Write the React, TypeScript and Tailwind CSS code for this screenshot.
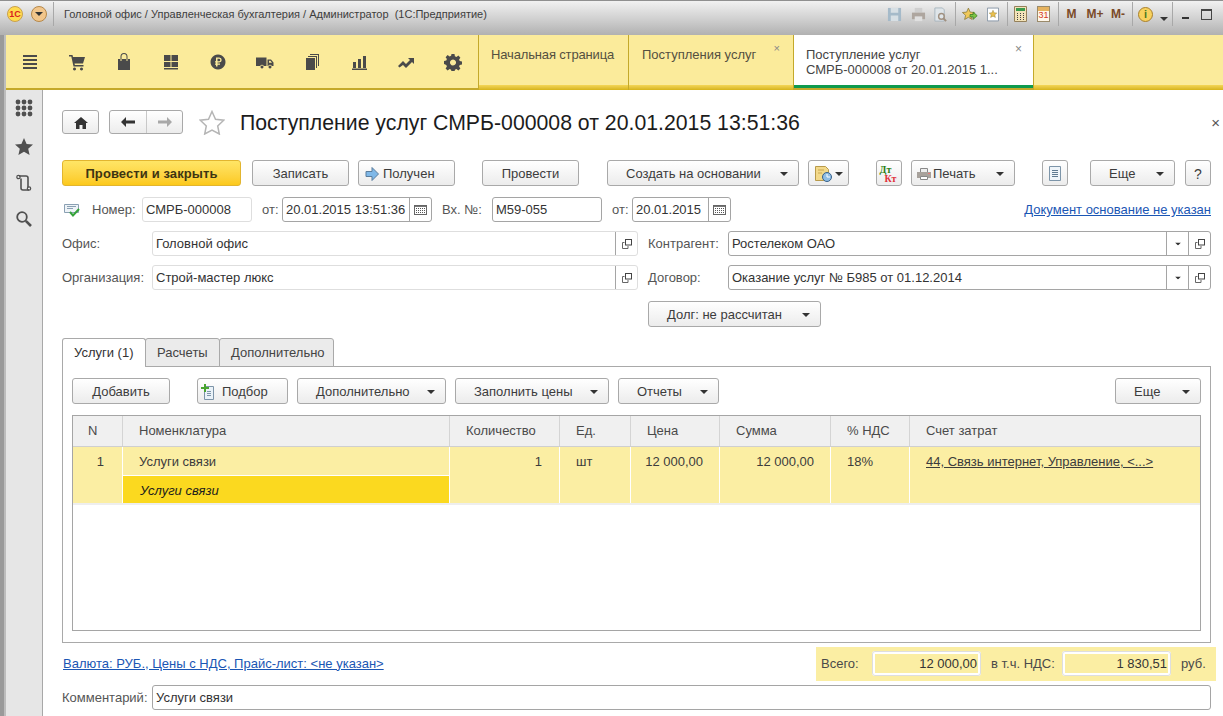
import React from 'react';

const font = "font-['Liberation_Sans',Arial,sans-serif]";

function Caret({ className = '' }: { className?: string }) {
  return (
    <svg width="8" height="4" viewBox="0 0 8 4" className={className}>
      <path d="M0 0h8L4 4z" fill="#333" />
    </svg>
  );
}

function Btn({
  className = '',
  children,
  caret,
}: {
  className?: string;
  children?: React.ReactNode;
  caret?: boolean;
}) {
  return (
    <div
      className={`relative flex h-[26px] shrink-0 items-center justify-center rounded-[3px] border border-[#a9a9a9] bg-gradient-to-b from-white to-[#ececec] pt-px text-[#3c3c3c] ${className}`}
    >
      {children}
      {caret && <Caret className="absolute right-[10px] top-[11px]" />}
    </div>
  );
}

function Cal() {
  return (
    <svg width="13" height="10" viewBox="0 0 13 10">
      <rect x="0.5" y="0.5" width="12" height="9" fill="#fff" stroke="#666" />
      <path d="M1 1.500h11" stroke="#777" />
      <path d="M2 3.500h1M4 3.500h1M6 3.500h1M8 3.500h1M10 3.500h1M2 5.500h1M4 5.500h1M6 5.500h1M8 5.500h1M10 5.500h1M2 7.500h1M4 7.500h1M6 7.500h1M8 7.500h1M10 7.500h1" stroke="#555" />
    </svg>
  );
}

function OpenIcon() {
  return (
    <svg width="10" height="10" viewBox="0 0 10 10" fill="none">
      <path d="M.5 3.500h2M.5 3.500v6h5.500V7" stroke="#666" />
      <rect x="3.500" y="0.500" width="6" height="5.500" stroke="#444" />
    </svg>
  );
}

function Input({
  className = '',
  children,
  light,
}: {
  className?: string;
  children?: React.ReactNode;
  light?: boolean;
}) {
  return (
    <div
      className={`flex h-[25px] shrink-0 items-center overflow-hidden whitespace-nowrap rounded-[3px] border bg-white text-[#333] ${
        light ? 'border-[#dedede]' : 'border-[#a5a5a5]'
      } ${className}`}
    >
      {children}
    </div>
  );
}

function Side({ className = '', children }: { className?: string; children: React.ReactNode }) {
  return (
    <div className={`flex h-full w-[22px] shrink-0 items-center justify-center border-l border-[#a5a5a5] ${className}`}>
      {children}
    </div>
  );
}

function Label({ className = '', children }: { className?: string; children: React.ReactNode }) {
  return <span className={`shrink-0 whitespace-nowrap text-[#555] ${className}`}>{children}</span>;
}

function Sep({ className = '' }: { className?: string }) {
  return <div className={`h-[24px] w-px shrink-0 bg-[#a8a8a8] ${className}`} />;
}

const topIcons = [
  <path key="m" d="M1 2h14v2H1zM1 6h14v2H1zM1 10h14v2H1zM1 14h14v2H1z" />,
  <path key="c" d="M0 2h3.500l.5 2h12l-2 6.500H5.500l.4 1.500H14.500v1.500H4.500L2.300 3.500H0zM5.500 14.500a1.500 1.500 0 1 0 .01 0zM12.500 14.500a1.500 1.500 0 1 0 .01 0z" />,
  <path key="b" fillRule="evenodd" d="M2 6h2.500V3.500a3.500 3.500 0 0 1 7 0V6H14v11H2zM5.500 6h5V3.500a2.500 2.500 0 0 0-5 0zM4.500 6v2h1V6zM10.500 6v2h1V6z" />,
  <path key="g" d="M1 2h6.500v6H1zM8.500 2H15v6H8.500zM1 9h6.500v5H1zM8.500 9H15v5H8.500zM1 15h14v1.500H1z" />,
  <path key="r" fillRule="evenodd" d="M8 1.500a7.500 7.500 0 1 0 .01 0zM6 4.500h3.200a2.500 2.500 0 0 1 0 5H7.500v1H10v1.300H7.500v1.700H6v-1.700H5v-1.300h1v-1H5V8.200h1zM7.500 5.800v2.400h1.600a1.200 1.200 0 0 0 0-2.400z" />,
  <path
    key="t"
    fillRule="evenodd"
    d="M-1 4.500h10.500v8.500H6.800a2 2 0 0 0-3.600 0H-1zM10.500 6.500H14l2.500 3v3.500h-1.700a2 2 0 0 0-3.600 0h-.7zM12 7.700v2h3l-1.600-2zM5 12.500a1.500 1.500 0 1 0 .01 0zM13 12.500a1.500 1.500 0 1 0 .01 0z"
  />,
  <path key="d" d="M2 5h9v12H2zM4 3h9v12h-1V4H4zM6 1h9v12h-1V2H6z" />,
  <path key="h" d="M2 9h3v6H2zM7 6h3v9H7zM12 3h3v12h-3zM1 15.500h15V17H1z" />,
  <path key="l" d="M0 13l5-5 3 3 4-4-2-2h6v6l-2-2-6 6-3-3-3.500 2.500z" />,
  <path key="s" fillRule="evenodd" d="M6.500 1h3l.4 2.300 1.500.6 2-1.300 2 2.100-1.300 1.900.6 1.500 2.300.4v3l-2.300.4-.6 1.500 1.300 2-2 2-2-1.300-1.500.6-.4 2.300h-3l-.4-2.300-1.500-.6-2 1.300-2-2 1.300-2-.6-1.500L-1 11V8l2.300-.4.6-1.500-1.300-1.900 2-2.100 2 1.300 1.500-.6zM8 6.500a3 3 0 1 0 .01 0z" />,
];

const columns = 'grid-cols-[50px_327px_110px_71px_89px_111px_79px_1fr]';

export default function App() {
  return (
    <div className={`h-[716px] w-[1223px] overflow-hidden bg-white text-[13px] leading-none ${font}`}>
      {/* window caption */}
      <div className="flex h-[35px] items-center border-t border-[#8f8f8f] bg-gradient-to-b from-[#f1f1f1] via-[#d2d2d2] to-[#b1b1b1] pb-[8px]">
        <div className="ml-[7px] flex h-[16px] w-[16px] shrink-0 items-center justify-center rounded-full border border-[#c9a04d] bg-[#ffdb4d] text-[9px] font-bold text-[#d8231f]">
          1С
        </div>
        <div className="ml-[8px] flex h-[16px] w-[16px] shrink-0 items-center justify-center rounded-full border border-[#b5884a] bg-[#f2c68b]">
          <Caret />
        </div>
        <Sep className="ml-[6px]" />
        <span className="ml-[10px] whitespace-pre text-[11px] text-[#3d3d3d]">
          Головной офис / Управленческая бухгалтерия / Администратор  (1С:Предприятие)
        </span>
        <div className="ml-auto flex items-center">
          <svg width="15" height="15" viewBox="0 0 16 16" className="mr-[9px]">
            <path d="M1 1h14v14H1z" fill="#a5bac9" />
            <path d="M4 1h8v5H4zM4 9h8v6H4z" fill="#d7dfe4" />
          </svg>
          <svg width="15" height="15" viewBox="0 0 16 16" className="mr-[7px]">
            <path d="M4 1h8v5H4z" fill="#cfcfcf" />
            <path d="M1 6h14v7H1z" fill="#aea69f" />
            <path d="M4 10h8v5H4z" fill="#e0e0e0" />
          </svg>
          <svg width="15" height="15" viewBox="0 0 16 16" className="mr-[7px]">
            <path d="M2 1h8l2 2v12H2z" fill="#dfe5e9" stroke="#a9b6bf" />
            <circle cx="9" cy="10" r="3" fill="none" stroke="#a09080" strokeWidth="1.500" />
            <path d="M11 12l3 3" stroke="#a09080" strokeWidth="2" />
          </svg>
          <Sep className="mr-[6px]" />
          <svg width="16" height="15" viewBox="0 0 20 18" className="mr-[9px]">
            <path d="M8 1l2.200 5 5.300.5-4 3.500 1.200 5.200L8 12.500 3.300 15.200 4.500 10l-4-3.500L5.800 6z" fill="#f0c85a" stroke="#8a7a3a" />
            <path d="M10 9h4V6l5 4.500-5 4.500v-3h-4z" fill="#7cc545" stroke="#3d7d22" />
          </svg>
          <svg width="12" height="15" viewBox="0 0 14 16" className="mr-[8px]">
            <path d="M.5.500h13v15H.5z" fill="#fff" stroke="#7d8da0" />
            <path d="M7 3l1.300 3 3.200.3-2.400 2.100.7 3.100L7 9.900 4.200 11.500l.7-3.100L2.500 6.300 5.700 6z" fill="#e9bf4d" stroke="#8a7a3a" strokeWidth="0.500" />
          </svg>
          <Sep className="mr-[6px]" />
          <svg width="13" height="16" viewBox="0 0 13 16" className="mr-[10px]">
            <path d="M.5.500h12v15H.5z" fill="#f3e3b8" stroke="#94805a" />
            <path d="M2 2h9v3H2z" fill="#3a9a4c" />
            <path d="M3 7.500h1M6 7.500h1M9 7.500h1M3 9.500h1M6 9.500h1M9 9.500h1M3 11.500h1M6 11.500h1M9 11.500h1M3 13.500h1M6 13.500h1M9 13.500h1" stroke="#444" />
          </svg>
          <div className="relative mr-[8px] flex h-[16px] w-[13px] items-end justify-center border border-[#9a8a6a] bg-[#fff7ea] text-[9px] leading-[11px] text-[#d23a1f]">
            31
            <div className="absolute inset-x-0 top-0 h-[4px] bg-[#e6b35f]" />
          </div>
          <Sep className="mr-[8px]" />
          <span className="mr-[11px] flex w-[9px] justify-center text-[12px] font-bold text-[#7a4a28]">M</span>
          <span className="mr-[7px] flex w-[16px] justify-center text-[12px] font-bold text-[#7a4a28]">M+</span>
          <span className="mr-[6px] flex w-[16px] justify-center text-[12px] font-bold text-[#7a4a28]">M-</span>
          <Sep className="mr-[5px]" />
          <div className="mr-[7px] flex h-[15px] w-[15px] items-center justify-center rounded-full border border-[#a87f2c] bg-[#f8d25e] text-[11px] font-bold text-[#4e7a22]">
            i
          </div>
          <Caret className="mr-[4px] mt-[9px]" />
          <Sep className="mr-[9px]" />
          <div className="mr-[12px] mt-[7px] h-[2px] w-[7px] bg-[#333]" />
          <div className="mr-[11px] h-[11px] w-[11px] border border-t-2 border-[#444]" />
        </div>
      </div>

      <div className="flex h-[681px]">
        <div className="flex w-[6px] shrink-0">
          <div className="w-[4px] bg-[#9a9a9a]" />
          <div className="w-[2px] bg-[#bdbdbd]" />
        </div>
        <div className="flex min-w-0 flex-1 flex-col">
          {/* sections panel and open tabs */}
          <div className="flex h-[55px] shrink-0 bg-[#fbeb9b]">
            <div className="flex w-[472px] shrink-0 border-b-2 border-[#c4a92a]">
              {topIcons.map((icon, i) => (
                <div key={i} className="flex w-[47px] items-center justify-center">
                  <svg width="18" height="18" viewBox="-1 0 18 18" fill="#4a4a4a">
                    {icon}
                  </svg>
                </div>
              ))}
            </div>
            <div className="flex h-full w-[150px] shrink-0 flex-col border-l border-[#c4a92a]">
              <div className="flex-1 whitespace-nowrap pl-[12px] pt-[13px] tracking-[-0.15px] text-[#54503f]">Начальная страница</div>
              <div className="h-[5px] bg-gradient-to-b from-[#f4d655] to-[#d6b416]" />
            </div>
            <div className="flex h-full w-[165px] shrink-0 flex-col border-l border-[#c4a92a]">
              <div className="relative flex-1 whitespace-nowrap pl-[13px] pt-[13px] text-[#54503f]">
                Поступления услуг
                <span className="absolute right-[13px] top-[8px] text-[11px] text-[#888]">×</span>
              </div>
              <div className="h-[5px] bg-gradient-to-b from-[#f4d655] to-[#d6b416]" />
            </div>
            <div className="flex h-full w-[241px] shrink-0 flex-col border-x border-[#c4a92a] bg-white">
              <div className="relative flex-1 whitespace-nowrap pl-[12px] pt-[12px] leading-[15px] text-[#444]">
                Поступление услуг
                <br />
                СМРБ-000008 от 20.01.2015 1...
                <span className="absolute right-[11px] top-[7px] text-[12px] text-[#888]">×</span>
              </div>
              <div className="h-[3px] bg-[#0f9a4e]" />
              <div className="h-[2px] bg-[#c4a92a]" />
            </div>
            <div className="flex flex-1 flex-col justify-end">
              <div className="h-[5px] bg-gradient-to-b from-[#f4d655] to-[#d6b416]" />
            </div>
          </div>

          <div className="flex min-h-0 flex-1">
            {/* function panel */}
            <div className="flex w-[37px] shrink-0 flex-col items-center border-r border-[#a8a8a8] bg-[#e6e6e6] pr-[1px]">
              <svg width="18" height="18" viewBox="0 0 18 18" fill="#505050" className="mt-[9px]">
                {[3, 9, 15].flatMap((y) => [3, 9, 15].map((x) => <circle key={`${x}-${y}`} cx={x} cy={y} r="2.400" />))}
              </svg>
              <svg width="18" height="18" viewBox="0 0 18 18" fill="#505050" className="mt-[21px]">
                <path d="M9 0l2.600 6 6.400.6-4.800 4.200 1.400 6.200L9 13.800 3.400 17l1.400-6.200L0 6.600 6.400 6z" />
              </svg>
              <svg width="18" height="18" viewBox="0 0 18 18" fill="none" stroke="#505050" strokeWidth="1.600" className="mt-[18px]">
                <path d="M4 2h7a2 2 0 0 1 2 2v9.500M14 16H8a2 2 0 0 1-2-2V4.500" />
                <circle cx="3.500" cy="3" r="1.700" strokeWidth="1.200" />
                <circle cx="14" cy="14.500" r="1.700" strokeWidth="1.200" />
              </svg>
              <svg width="18" height="18" viewBox="0 0 18 18" fill="none" stroke="#505050" className="mt-[18px]">
                <circle cx="7" cy="7" r="4.800" strokeWidth="1.800" />
                <path d="M10.800 10.800L16 16" strokeWidth="2.600" />
              </svg>
            </div>

            <main className="relative min-w-0 flex-1 pl-[19px] pr-[12px]">
              {/* header */}
              <div className="mt-[20px] flex h-[24px] items-center">
                <Btn className="!h-[24px] w-[37px]">
                  <svg width="14" height="12" viewBox="0 0 14 12" fill="#333">
                    <path d="M7 0l7 6h-2v6H8.500V8h-3v4H2V6H0z" />
                  </svg>
                </Btn>
                <div className="ml-[10px] flex h-[24px] w-[74px] overflow-hidden rounded-[3px] border border-[#a9a9a9] bg-gradient-to-b from-white to-[#ececec]">
                  <div className="flex w-[37px] items-center justify-center border-r border-[#c8c8c8]">
                    <svg width="14" height="10" viewBox="0 0 14 10" fill="#333">
                      <path d="M5 0v3.500h9v3H5V10L0 5z" />
                    </svg>
                  </div>
                  <div className="flex flex-1 items-center justify-center">
                    <svg width="14" height="10" viewBox="0 0 14 10" fill="#a8a8a8">
                      <path d="M9 0v3.500H0v3h9V10l5-5z" />
                    </svg>
                  </div>
                </div>
                <svg width="26" height="25" viewBox="0 0 26 25" className="ml-[16px]">
                  <path d="M13 1.500l3.500 7.700 8.200 1-6 5.700 1.600 8.100-7.300-4-7.300 4 1.600-8.100-6-5.700 8.200-1z" fill="#fff" stroke="#b5b5b5" strokeWidth="1.500" />
                </svg>
                <h1 className="ml-[15px] mt-[3px] whitespace-nowrap text-[21.25px] font-normal text-[#1c1c1c]">
                  Поступление услуг СМРБ-000008 от 20.01.2015 13:51:36
                </h1>
                <span className="absolute right-[3px] top-[25px] text-[15px] text-[#555]">×</span>
              </div>

              {/* command bar */}
              <div className="mt-[26px] flex">
                <Btn className="w-[179px] !border-[#e2b52f] !bg-gradient-to-b !from-[#ffe565] !to-[#fcc919] font-bold tracking-[0.1px] !text-[#3d3412]">
                  Провести и закрыть
                </Btn>
                <Btn className="ml-[11px] w-[97px]">Записать</Btn>
                <Btn className="ml-[9px] w-[97px] justify-start pl-[6px]">
                  <svg width="14" height="14" viewBox="0 0 14 14" className="mr-[4px]">
                    <path d="M1 4.500h6v-4L13.500 7 7 13.500v-4H1z" fill="#7fb8e8" stroke="#5b7d9c" />
                  </svg>
                  Получен
                </Btn>
                <Btn className="ml-[27px] w-[97px]">Провести</Btn>
                <Btn className="ml-[28px] w-[192px] justify-start pl-[18px]" caret>
                  Создать на основании
                </Btn>
                <Btn className="ml-[9px] w-[41px] justify-start pl-[5px]">
                  <svg width="20" height="18" viewBox="0 0 20 18">
                    <path d="M1.500 1.500h10l3 3v11h-13z" fill="#f3d98a" stroke="#b89a4a" />
                    <path d="M4 5h6M4 8h4" stroke="#c9a850" />
                    <circle cx="13" cy="12" r="4.500" fill="#8fbde4" stroke="#38618a" />
                    <path d="M13 9v3h3" stroke="#fff" fill="none" />
                  </svg>
                  <Caret className="ml-px" />
                </Btn>
                <Btn className="ml-[27px] w-[26px]">
                  <div className="flex flex-col text-[10px] font-bold leading-[9px] [font-family:'Liberation_Serif',serif]">
                    <span className="-ml-[2px] text-[#2c7d13]">Дт</span>
                    <span className="ml-[3px] text-[#e0303a]">Кт</span>
                  </div>
                </Btn>
                <Btn className="ml-[9px] w-[104px] justify-start pl-[5px]" caret>
                  <svg width="14" height="14" viewBox="0 0 14 14" className="mr-[2px]">
                    <path d="M3.500 1.500h7v4h-7z" fill="#eee" stroke="#888" />
                    <path d="M0 5h14v6H0z" fill="#a8a29c" />
                    <path d="M3.500 9.500h7v3h-7z" fill="#fff" stroke="#888" />
                    <path d="M11 6h2v1h-2z" fill="#e77" />
                  </svg>
                  Печать
                </Btn>
                <Btn className="ml-[27px] w-[26px]">
                  <svg width="12" height="15" viewBox="0 0 12 15">
                    <path d="M.5.500h11v14H.5z" fill="#eef4f9" stroke="#7d95a9" />
                    <path d="M3 4.500h6M3 6.500h6M3 8.500h6M3 10.500h6" stroke="#5f7a90" />
                  </svg>
                </Btn>
                <Btn className="ml-[22px] w-[85px] justify-start pl-[18px]" caret>
                  Еще
                </Btn>
                <Btn className="ml-[10px] w-[26px] text-[14px]">?</Btn>
              </div>

              {/* number and date */}
              <div className="mt-[11px] flex h-[25px] items-center">
                <div className="w-[30px] shrink-0 pl-[2px]">
                  <svg width="16" height="14" viewBox="0 0 16 14">
                    <path d="M.5 1.500h14v8h-14z" fill="#eef3f7" stroke="#8aa0b3" />
                    <path d="M3 3.500h9M3 5.500h6" stroke="#8aa0b3" />
                    <path d="M6 9l3 3.500L15 6" fill="none" stroke="#35a33a" strokeWidth="2" />
                  </svg>
                </div>
                <Label className="w-[50px]">Номер:</Label>
                <Input light className="w-[110px] pl-[3px]">СМРБ-000008</Input>
                <Label className="w-[30px] pl-[10px]">от:</Label>
                <Input className="w-[150px] pl-[3px]">
                  <span className="flex-1">20.01.2015 13:51:36</span>
                  <Side>
                    <Cal />
                  </Side>
                </Input>
                <Label className="w-[60px] pl-[10px]">Вх. №:</Label>
                <Input className="w-[110px] pl-[3px]">М59-055</Input>
                <Label className="w-[30px] pl-[10px]">от:</Label>
                <Input className="w-[99px] pl-[3px]">
                  <span className="flex-1">20.01.2015</span>
                  <Side>
                    <Cal />
                  </Side>
                </Input>
                <a className="ml-auto whitespace-nowrap text-[#1a56b4] underline">Документ основание не указан</a>
              </div>

              {/* counterparties */}
              <div className="mt-[9px] flex h-[25px] items-center">
                <Label className="w-[90px]">Офис:</Label>
                <Input light className="w-[486px] pl-[3px]">
                  <span className="flex-1">Головной офис</span>
                  <Side>
                    <OpenIcon />
                  </Side>
                </Input>
                <Label className="w-[90px] pl-[10px]">Контрагент:</Label>
                <Input className="flex-1 pl-[3px]">
                  <span className="flex-1">Ростелеком ОАО</span>
                  <Side>
                    <Caret className="scale-75" />
                  </Side>
                  <Side>
                    <OpenIcon />
                  </Side>
                </Input>
              </div>
              <div className="mt-[9px] flex h-[25px] items-center">
                <Label className="w-[90px]">Организация:</Label>
                <Input light className="w-[486px] pl-[3px]">
                  <span className="flex-1">Строй-мастер люкс</span>
                  <Side>
                    <OpenIcon />
                  </Side>
                </Input>
                <Label className="w-[90px] pl-[10px]">Договор:</Label>
                <Input className="flex-1 pl-[3px]">
                  <span className="flex-1">Оказание услуг № Б985 от 01.12.2014</span>
                  <Side>
                    <Caret className="scale-75" />
                  </Side>
                  <Side>
                    <OpenIcon />
                  </Side>
                </Input>
              </div>
              <Btn className="ml-[586px] mt-[11px] w-[173px] justify-start pl-[18px]" caret>
                Долг: не рассчитан
              </Btn>

              {/* tabs */}
              <div className="relative z-10 mt-[11px] flex h-[29px] items-stretch whitespace-nowrap">
                <div className="w-[84px] rounded-t-[3px] border border-b-0 border-[#a9a9a9] bg-white pl-[11px] pt-[7px] text-[#333]">
                  Услуги (1)
                </div>
                <div className="-ml-px w-[75px] rounded-t-[3px] border border-[#a9a9a9] bg-[#ebebeb] pl-[11px] pt-[7px] text-[#444]">
                  Расчеты
                </div>
                <div className="-ml-px w-[115px] rounded-t-[3px] border border-[#a9a9a9] bg-[#ebebeb] pl-[11px] pt-[7px] text-[#444]">
                  Дополнительно
                </div>
              </div>
              <div className="-mt-px h-[277px] border border-[#a9a9a9] px-[9px] pt-[11px]">
                <div className="flex whitespace-nowrap">
                  <Btn className="w-[98px]">Добавить</Btn>
                  <Btn className="ml-[27px] w-[91px] justify-start pl-[3px]">
                    <svg width="16" height="16" viewBox="0 0 16 16" className="mr-[5px]">
                      <path d="M3.500 2.500h9v13h-9z" fill="#eaf2f8" stroke="#7d94a8" />
                      <path d="M6 7.500h4M6 9.500h4M6 11.500h4" stroke="#7d94a8" />
                      <path d="M3 0h2v3h3v2H5v3H3V5H0V3h3z" fill="#49a52f" />
                    </svg>
                    Подбор
                  </Btn>
                  <Btn className="ml-[9px] w-[149px] justify-start pl-[18px]" caret>
                    Дополнительно
                  </Btn>
                  <Btn className="ml-[9px] w-[154px] justify-start pl-[18px]" caret>
                    Заполнить цены
                  </Btn>
                  <Btn className="ml-[9px] w-[101px] justify-start pl-[18px]" caret>
                    Отчеты
                  </Btn>
                  <Btn className="ml-auto w-[86px] justify-start pl-[18px]" caret>
                    Еще
                  </Btn>
                </div>

                {/* table */}
                <div className="mt-[11px] h-[216px] border border-[#a5a5a5] whitespace-nowrap">
                  <div className={`grid h-[31px] border-b border-[#cfcfcf] bg-[#f0f0f0] text-[#4a4a4a] ${columns}`}>
                    <div className="flex items-center border-r border-[#d4d4d4] pb-[2px] pl-[15px]">N</div>
                    <div className="flex items-center border-r border-[#d4d4d4] pb-[2px] pl-[16px]">Номенклатура</div>
                    <div className="flex items-center border-r border-[#d4d4d4] pb-[2px] pl-[16px]">Количество</div>
                    <div className="flex items-center border-r border-[#d4d4d4] pb-[2px] pl-[16px]">Ед.</div>
                    <div className="flex items-center border-r border-[#d4d4d4] pb-[2px] pl-[16px]">Цена</div>
                    <div className="flex items-center border-r border-[#d4d4d4] pb-[2px] pl-[16px]">Сумма</div>
                    <div className="flex items-center border-r border-[#d4d4d4] pb-[2px] pl-[16px]">% НДС</div>
                    <div className="flex items-center pb-[2px] pl-[16px]">Счет затрат</div>
                  </div>
                  <div className={`grid h-[58px] border-b-2 border-[#eeeeee] bg-[#fbeea3] text-[#3c3c3c] ${columns}`}>
                    <div className="border-r border-white pr-[18px] pt-[8px] text-right">1</div>
                    <div className="flex flex-col border-r border-white">
                      <div className="h-[28px] pl-[16px] pt-[8px]">Услуги связи</div>
                      <div className="flex flex-1 items-center border-t border-white bg-[#fbd91f] pl-[17px] pt-[2px] italic text-[#1c1c1c]">
                        Услуги связи
                      </div>
                    </div>
                    <div className="border-r border-white pr-[17px] pt-[8px] text-right">1</div>
                    <div className="border-r border-white pl-[16px] pt-[8px]">шт</div>
                    <div className="border-r border-white pr-[16px] pt-[8px] text-right">12 000,00</div>
                    <div className="border-r border-white pr-[16px] pt-[8px] text-right">12 000,00</div>
                    <div className="border-r border-white pl-[16px] pt-[8px]">18%</div>
                    <div className="pl-[16px] pt-[8px] underline">44, Связь интернет, Управление, &lt;...&gt;</div>
                  </div>
                </div>
              </div>

              {/* footer */}
              <div className="mt-[4px] flex h-[34px] items-center whitespace-nowrap">
                <a className="mb-[2px] ml-px text-[#1a56b4] underline">
                  Валюта: РУБ., Цены с НДС, Прайс-лист: &lt;не указан&gt;
                </a>
                <div className="-mr-[5px] ml-auto flex h-[34px] w-[400px] items-center bg-[#fbeea3] pb-[2px] pl-[5px] text-[#4a4a4a]">
                  <span className="w-[51px]">Всего:</span>
                  <div className="flex h-[25px] w-[109px] items-center justify-end rounded-[3px] border-[3px] border-white pr-[1px] text-[#333] outline outline-1 -outline-offset-1 outline-[#dedede]">
                    12 000,00
                  </div>
                  <span className="ml-[10px] w-[71px]">в т.ч. НДС:</span>
                  <div className="flex h-[25px] w-[109px] items-center justify-end rounded-[3px] border-[3px] border-white pr-[1px] text-[#333] outline outline-1 -outline-offset-1 outline-[#dedede]">
                    1 830,51
                  </div>
                  <span className="ml-[10px]">руб.</span>
                </div>
              </div>
              <div className="mt-[4px] flex h-[25px] items-center">
                <Label className="w-[90px]">Комментарий:</Label>
                <Input className="flex-1 pl-[3px]">Услуги связи</Input>
              </div>
            </main>
          </div>
        </div>
      </div>
    </div>
  );
}
